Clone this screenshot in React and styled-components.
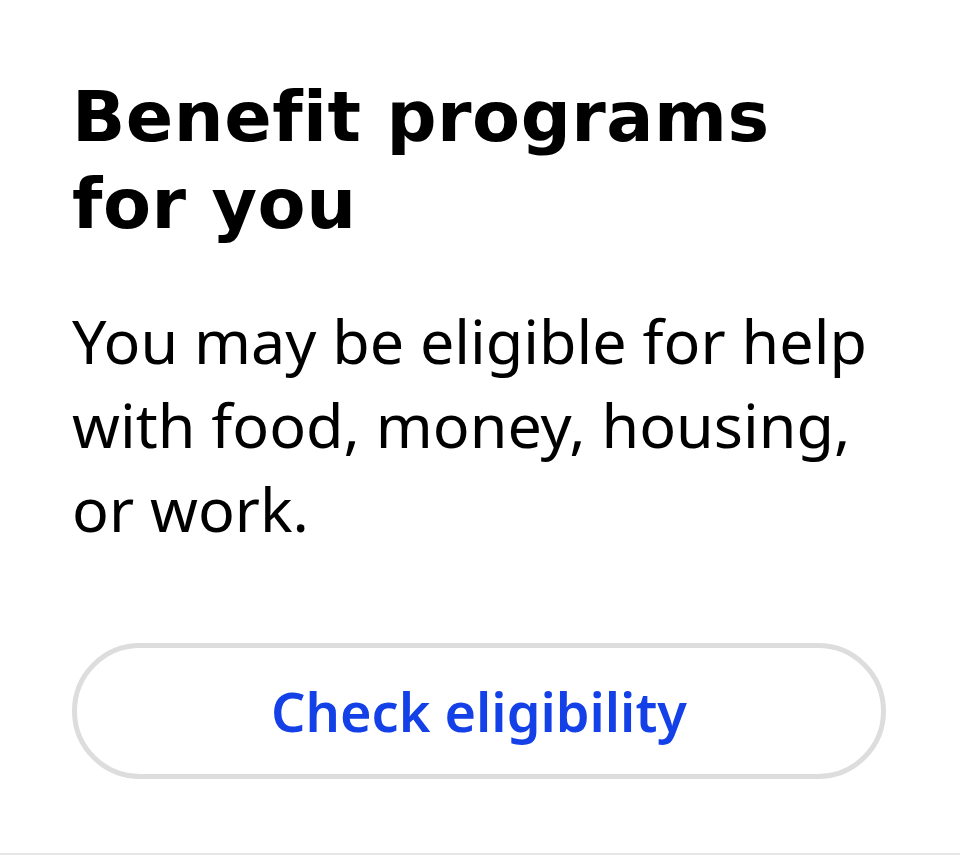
import styled, { createGlobalStyle } from 'styled-components';

const GlobalStyle = createGlobalStyle`
  html, body {
    margin: 0;
    padding: 0;
    background: #fff;
  }
`;

const Card = styled.section`
  box-sizing: border-box;
  height: 855px;
  padding: 74px 74px 0 72px;
  background: #fff;
  border-bottom: 2px solid #e6e6e6;
  display: flex;
  flex-direction: column;
`;

const Title = styled.h2`
  margin: 0;
  max-width: 760px;
  font-family: 'DejaVu Sans', sans-serif;
  font-weight: 700;
  font-size: 70px;
  line-height: 87px;
  letter-spacing: 0.5px;
  color: #000;
`;

const Text = styled.p`
  margin: 51px 0 0;
  font-family: 'Noto Sans', sans-serif;
  font-size: 61px;
  line-height: 84px;
  color: #000;
`;

const Button = styled.button`
  margin-top: 92px;
  height: 136px;
  width: 100%;
  border: 5px solid #dddddd;
  border-radius: 68px;
  background: #fff;
  font-family: 'Noto Sans', sans-serif;
  font-weight: 600;
  font-size: 54px;
  color: #1440e8;
  cursor: pointer;
`;

const App = () => {
  return (
    <>
      <GlobalStyle />
      <Card>
        <Title>Benefit programs for you</Title>
        <Text>You may be eligible for help with food, money, housing, or work.</Text>
        <Button>Check eligibility</Button>
      </Card>
    </>
  );
};

export default App;
